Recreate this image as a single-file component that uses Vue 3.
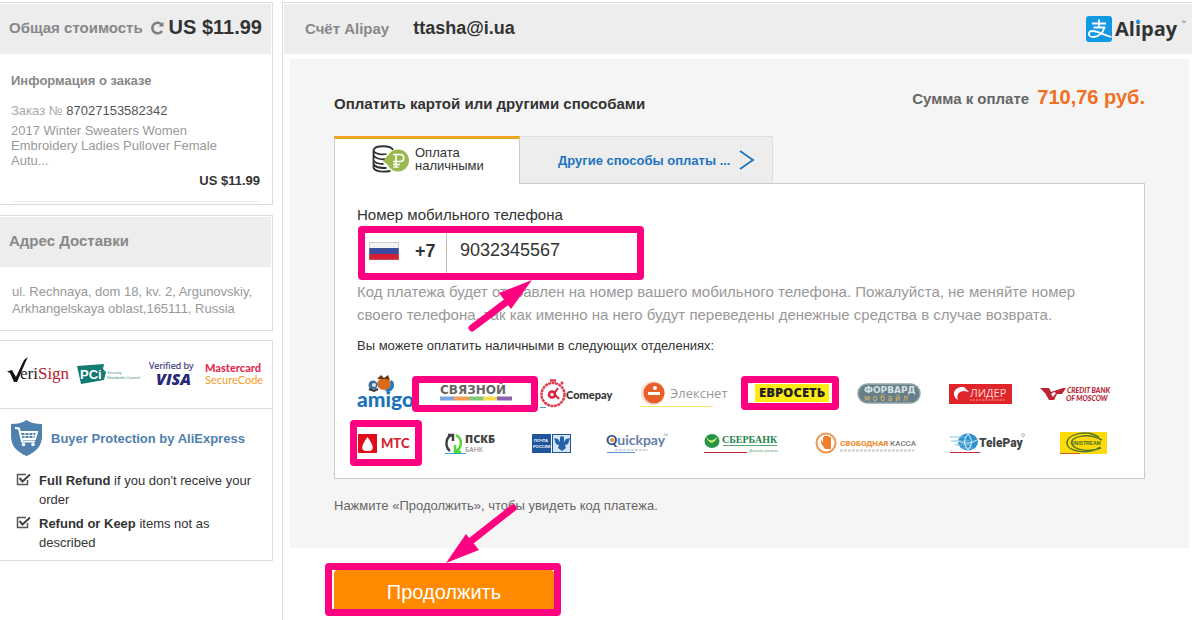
<script setup>
import { ref } from 'vue'

const phone = ref('9032345567')
const refunds = [
  { lead: 'Full Refund', rest: 'if you don\'t receive your order' },
  { lead: 'Refund or Keep', rest: 'items not as described' },
]
</script>

<template>
  <div class="page">
    <aside class="side">
      <section class="card total">
        <header class="bar">
          <h2>Общая стоимость</h2>
          <svg class="reload" width="14" height="14" viewBox="0 0 14 14">
            <path d="M12 4A5.300 5.300 0 1 0 12 10" fill="none" stroke="#808080" stroke-width="2.600" />
            <path d="M8.500 5.500h5V1z" fill="#808080" />
          </svg>
          <strong>US $11.99</strong>
        </header>
        <div class="order">
          <h3>Информация о заказе</h3>
          <p class="number">Заказ № <span>87027153582342</span></p>
          <p class="item">2017 Winter Sweaters Women<br />Embroidery Ladies Pullover Female<br />Autu...</p>
          <p class="price">US $11.99</p>
        </div>
      </section>

      <section class="card address">
        <header class="bar"><h2>Адрес Доставки</h2></header>
        <p>ul. Rechnaya, dom 18, kv. 2, Argunovskiy,<br />Arkhangelskaya oblast,165111, Russia</p>
      </section>

      <section class="card trust">
        <div class="seals">
          <svg width="62" height="32" viewBox="0 0 62 32">
            <text x="13" y="22" class="serif" font-size="17" fill="#222">eri<tspan fill="#b5202c">Sign</tspan></text>
            <path d="M0 14.500l5-1.500 4 7L17 3l4-3-2 4-9 21H7L3 16z" fill="#111" />
          </svg>
          <svg width="64" height="32" viewBox="0 0 64 32">
            <path d="M0 9l27-2-1 5 3 3-2 8-23 4z" fill="#147a74" />
            <text x="3" y="22" font-size="13" font-weight="700" fill="#fff">PCi</text>
            <text x="30" y="17" font-size="4" fill="#3d918b">Security</text>
            <text x="30" y="22" font-size="4" fill="#3d918b">Standards Council</text>
          </svg>
          <svg width="48" height="32" viewBox="0 0 48 32">
            <text x="0" y="12" class="open" font-size="9" fill="#3b397f" stroke="#3b397f" stroke-width=".2">Verified by</text>
            <text x="7" y="28" class="open" font-size="16" font-weight="800" font-style="italic" fill="#292777">VISA</text>
          </svg>
          <svg width="60" height="32" viewBox="0 0 60 32">
            <text x="0" y="15" class="lato" font-size="11" font-weight="900" fill="#e52c50">Mastercard</text>
            <text x="0" y="27" class="lato" font-size="11" fill="#f49d25">SecureCode</text>
          </svg>
        </div>
        <div class="protection">
          <h3>
            <svg width="31" height="36" viewBox="0 0 31 36">
              <path d="M15.500 0C11 3 6 4 0 4v12c0 10 6 16 15.500 20C25 32 31 26 31 16V4C25 4 20 3 15.500 0z" fill="#4f80ae" />
              <path d="M4 8l4 .5 3 13h13M9 12h17l-2 7H11" fill="none" stroke="#fff" stroke-width="2" />
              <path d="M14 13v5M18 13v5M22 13v5M10 15.500h15" stroke="#fff" />
              <circle cx="12.500" cy="24.500" r="1.800" fill="#fff" /><circle cx="22" cy="24.500" r="1.800" fill="#fff" />
            </svg>
            <span>Buyer Protection by AliExpress</span>
          </h3>
          <ul>
            <li v-for="r in refunds" :key="r.lead">
              <svg width="15" height="13" viewBox="0 0 15 13">
                <path d="M10 1.500H1.500v10h10V7" fill="none" stroke="#555" stroke-width="1.500" />
                <path d="M3.500 5l3 3.500L14 1.500" fill="none" stroke="#444" stroke-width="2" />
              </svg>
              <span><b>{{ r.lead }}</b> {{ r.rest }}</span>
            </li>
          </ul>
        </div>
      </section>
    </aside>

    <main class="main">
      <header class="bar account">
        <h2>Счёт Alipay</h2>
        <strong>ttasha@i.ua</strong>
        <svg class="alipay" width="102" height="26" viewBox="0 0 102 26">
          <rect width="26" height="26" rx="3" fill="#1199e4" />
          <path d="M6 7.500h14M13 3.500v8M7.500 11.500h11c-1.500 5-6 9.500-11 9.500-6 0-6-6-1-6 6 0 11 4 19 6" fill="none" stroke="#fff" stroke-width="1.800" />
          <text x="29" y="20" class="open" font-size="20" font-weight="700" fill="#333">Alipay</text>
          <circle cx="52" cy="5.500" r="2" fill="#1199e4" />
          <text x="95" y="8" font-size="5" fill="#555">™</text>
        </svg>
      </header>

      <div class="panel">
        <div class="heading">
          <h1>Оплатить картой или другими способами</h1>
          <p>Сумма к оплате <strong>710,76 руб.</strong></p>
        </div>

        <div class="tabs">
          <button type="button" class="tab active">
            <svg width="38" height="28" viewBox="0 0 38 28">
              <g fill="none" stroke="#2f3133" stroke-width="1.800">
                <path d="M21 5C19 0 3 0 1.500 5c0 4 9 5 13 4M1.500 5v18c2 4 10 4 17 3M1.500 10c1 3 7 5 12 4M1.500 15c1 3 6 4 10 4M1.500 19c2 4 8 4 13 4" />
              </g>
              <circle cx="26" cy="15.500" r="11" fill="#99b94e" />
              <path d="M16 10l-5 6 5 4z" fill="#99b94e" />
              <path d="M24 22V9.500h4c5 0 5 7 0 7h-7M21 19.500h7M21 9.500h3M21.500 22h5" fill="none" stroke="#fff" stroke-width="1.600" />
            </svg>
            <span>Оплата<br />наличными</span>
          </button>
          <button type="button" class="tab other">
            <span>Другие способы оплаты ...</span>
            <svg width="16" height="20" viewBox="0 0 16 20">
              <path d="M1 1l13 9-13 9" fill="none" stroke="#1e74c0" stroke-width="1.800" />
            </svg>
          </button>
        </div>

        <div class="box">
          <label for="phone">Номер мобильного телефона</label>
          <div class="phone">
            <svg class="flag" width="30" height="18" viewBox="0 0 30 18">
              <rect width="30" height="18" fill="#f3f3f5" />
              <rect y="6" width="30" height="6" fill="#3e4c9e" />
              <rect y="12" width="30" height="6" fill="#d71c32" />
              <rect x=".5" y=".5" width="29" height="17" fill="none" stroke="#999" stroke-opacity=".4" />
            </svg>
            <b>+7</b>
            <input id="phone" v-model="phone" type="tel" />
            <svg class="arrow up" width="66" height="54" viewBox="0 0 66 54">
              <path d="M5 48L42 20" stroke="#ff0080" stroke-width="7" stroke-linecap="round" />
              <path d="M65 0L32 13l12 16z" fill="#ff0080" />
            </svg>
          </div>
          <p class="hint">Код платежа будет отправлен на номер вашего мобильного телефона. Пожалуйста, не меняйте номер своего телефона, так как именно на него будут переведены денежные средства в случае возврата.</p>
          <p class="places">Вы можете оплатить наличными в следующих отделениях:</p>

          <div class="brands first">
            <svg width="55" height="36" viewBox="0 0 55 36">
              <path d="M28 15c5 2 9-1 9-6 0-3-1-4-3-5" fill="#1c7ecb" />
              <ellipse cx="27" cy="8" rx="7" ry="6" fill="#d96b1c" />
              <path d="M20 3l4-4 3 3 4-3 2 5-5-1z" fill="#6c3514" />
              <circle cx="16" cy="9" r="4.500" fill="#416f9c" /><circle cx="17" cy="9" r="2" fill="#dce7ee" />
              <path d="M12 13l5 2 4-2" fill="none" stroke="#333" stroke-width="2" />
              <text x="0" y="31" class="lato" font-size="21" font-weight="900" fill="#1a72ba">amigo</text>
            </svg>
            <span class="marked svyaznoy">
              <svg width="72" height="36" viewBox="0 0 72 36">
                <text x="0" y="18" font-size="12" class="deja" font-weight="700" fill="#666">СВЯЗНОЙ</text>
                <path d="M0 22.500h14" stroke="#7aa5e2" stroke-width="4" /><path d="M14 22.500h15" stroke="#f69b55" stroke-width="4" />
                <path d="M29 22.500h14" stroke="#7fc57b" stroke-width="4" /><path d="M43 22.500h14" stroke="#f5df51" stroke-width="4" />
                <path d="M57 22.500h15" stroke="#8b63ae" stroke-width="4" />
              </svg>
            </span>
            <svg width="72" height="36" viewBox="0 0 72 36">
              <circle cx="13" cy="18.500" r="11.500" fill="none" stroke="#df3d51" stroke-width="2.500" stroke-dasharray="3 .5" />
              <path d="M10 4.500h6M21 6l2 2" stroke="#df3d51" stroke-width="2.500" />
              <circle cx="12" cy="18.500" r="3" fill="none" stroke="#d5233c" stroke-width="2.500" />
              <path d="M14 18l4-6M15 19l4 4" stroke="#d5233c" stroke-width="2" />
              <text x="26" y="23" class="lato" font-size="11" font-weight="900" fill="#333">Comepay</text>
              <path d="M0 31.500h6" stroke="#4699c0" />
            </svg>
            <svg width="87" height="36" viewBox="0 0 87 36">
              <circle cx="13" cy="17" r="12" fill="#f3dfd5" /><circle cx="14" cy="17" r="10.500" fill="#ea5f28" />
              <path d="M8 17.500h12" stroke="#fff" stroke-width="3" /><circle cx="15" cy="12" r="2" fill="#fff" />
              <text x="30" y="22" class="open" font-size="13" fill="#999">Элекснет</text>
              <path d="M0 30.500h73" stroke="#f6e76f" />
            </svg>
            <span class="marked evroset">
              <svg width="74" height="36" viewBox="0 0 74 36">
                <rect y="8" width="74" height="18" fill="#ffea12" />
                <text x="4" y="21" class="open" font-size="13" font-weight="800" fill="#222">ЕВРОСЕТЬ</text>
              </svg>
            </span>
            <svg width="64" height="36" viewBox="0 0 64 36">
              <rect x="1" y="8" width="62" height="19" rx="9.500" fill="#687e89" stroke="#93a6ad" stroke-width="1.500" />
              <text x="7" y="17" class="deja" font-size="9" font-weight="700" fill="#d6e1e6">ФОРВАРД</text>
              <text x="7" y="25" class="deja" font-size="8" fill="#ddb85d">м о б а й л</text>
            </svg>
            <svg width="63" height="36" viewBox="0 0 63 36">
              <rect y="8" width="63" height="20" fill="#df252a" />
              <path d="M9 24c-8-6-3-14 6-13l5 5-5-1c-5 0-8 4-6 9z" fill="#fff" />
              <text x="21" y="21" class="open" font-size="11" fill="#ffdcd8">ЛИДЕР</text>
              <path d="M21 24h36" stroke="#f0a09e" stroke-dasharray="2 1" />
            </svg>
            <svg width="71" height="36" viewBox="0 0 71 36">
              <path d="M0 12h9l2 4 12-4h3l-4 6h-5l-3 6h-5l-4-7H5z" fill="#bd2332" />
              <path d="M11 18l3-2 2 1-3 4z" fill="#fff" />
              <text x="27" y="17" class="lato" font-size="7" font-weight="900" font-style="italic" fill="#b92233">CREDIT BANK</text>
              <text x="26" y="25" class="lato" font-size="7" font-weight="900" font-style="italic" fill="#b92233">OF MOSCOW</text>
            </svg>
          </div>
          <div class="brands second">
            <span class="marked mts">
              <svg width="52" height="30" viewBox="0 0 52 30">
                <rect y="6" width="19" height="19" fill="#e20c19" /><path d="M9.500 9c-8 11-6 14 0 14s8-3 0-14z" fill="#fff" />
                <text x="23" y="20" class="lato" font-size="13" font-weight="900" fill="#d72130">МТС</text>
              </svg>
            </span>
            <svg width="52" height="30" viewBox="0 0 52 30">
              <path d="M7 7C0 9 0 19 5 23M3 7h5v6" fill="none" stroke="#3d4144" stroke-width="2.500" />
              <path d="M11 7c7 4 6 13 0 16M16 24h-6v-7" fill="none" stroke="#55d43c" stroke-width="2.500" />
              <text x="20" y="15" class="open" font-size="11" font-weight="800" fill="#3f4346">ПСКБ</text>
              <text x="20" y="24" class="open" font-size="7" fill="#777">БАНК</text><path d="M0 25.500h21" stroke="#35a6c3" />
            </svg>
            <svg width="39" height="30" viewBox="0 0 39 30">
              <rect y="6" width="19" height="19" fill="#1e559e" /><rect x="20.500" y="6.500" width="18" height="18" fill="#d5e5f5" stroke="#1e559e" />
              <text x="2" y="14" font-size="4" font-weight="700" fill="#fff">ПОЧТА</text><text x="1" y="20" font-size="4" font-weight="700" fill="#fff">РОССИИ</text>
              <path d="M22 10l4 1 2 3V9l2-1 2 1v5l2-3 4-1-2 6-3 1 1 3-4 3-4-3 1-3-3-1z" fill="#2563a8" />
            </svg>
            <svg width="63" height="30" viewBox="0 0 63 30">
              <text x="0" y="17" class="lato" font-size="14" font-weight="700" fill="#667eaa"><tspan fill="#31528a">Q</tspan>uickpay</text>
              <text x="57" y="9" font-size="5" fill="#667eaa">™</text>
              <circle cx="6" cy="12" r="2" fill="#ee8d3e" /><path d="M9 22h33" stroke="#9eabc4" stroke-dasharray="3 1" /><path d="M1 24.500h28" stroke="#5792d4" />
            </svg>
            <svg width="76" height="30" viewBox="0 0 76 30">
              <ellipse cx="8" cy="13" rx="7.500" ry="7" fill="#249449" /><path d="M2 8c3 6 8 5 12 0-3 8-9 10-12 0z" fill="#c0e36f" />
              <text x="18" y="15" class="serif" font-size="10" font-weight="700" fill="#25834a">СБЕРБАНК</text>
              <path d="M19 17.500h54" stroke="#5ba575" /><text x="45" y="24" class="serif" font-size="5" font-style="italic" fill="#58a16c">Всегда рядом</text><path d="M0 24.500h43" stroke="#b72037" />
            </svg>
            <svg width="100" height="30" viewBox="0 0 100 30">
              <circle cx="11" cy="15" r="9.500" fill="#fff" stroke="#ef9852" stroke-width="2" />
              <path d="M6 11v4l4 6h6V9h-2v5V8h-2v6V8H9v6V9H8v6z" fill="#ee7d2c" />
              <text x="25" y="18" class="roboto" font-size="8" font-weight="900" fill="#ef9039">СВОБОДНАЯ <tspan fill="#777" font-weight="500">КАССА</tspan></text>
              <path d="M25 22.500h74" stroke="#ccc" stroke-width="2" stroke-dasharray="3 1" />
            </svg>
            <svg width="75" height="30" viewBox="0 0 75 30">
              <ellipse cx="18" cy="14" rx="10" ry="8.500" fill="#2d91cf" /><path d="M0 9h17M1 13h18M5 17h17M12 20h11" stroke="#7cc3e3" stroke-width="1" />
              <path d="M8 13q10 5 19-1M18 6q-7 8 0 16M18 6q7 8 0 16" fill="none" stroke="#e5f3fa" />
              <text x="29" y="19" class="roboto" font-size="12" font-weight="900" fill="#444">TelePay</text>
              <circle cx="73" cy="7" r="1.500" fill="none" stroke="#777" stroke-width=".5" /><path d="M0 24.500h30" stroke="#ca2a3c" />
            </svg>
            <svg width="47" height="30" viewBox="0 0 47 30">
              <rect y="4" width="47" height="22" fill="#ffda09" /><path d="M39 9C27 1 7 6 7 15s22 12 33 4M42 12C27 4 9 9 12 16s19 8 29 4" fill="none" stroke="#50752c" stroke-width="1.500" />
              <text x="11" y="17" font-size="5" font-weight="700" fill="#446b2b">UNISTREAM</text><path d="M0 25.500h20" stroke="#d35a2b" />
            </svg>
          </div>
        </div>

        <p class="next">Нажмите «Продолжить», чтобы увидеть код платежа.</p>
      </div>

      <div class="submit">
        <button type="button">Продолжить</button>
        <svg class="arrow down" width="72" height="62" viewBox="0 0 72 62">
          <path d="M67 6L25 39" stroke="#ff0080" stroke-width="7" stroke-linecap="round" />
          <path d="M0 61l20-29 13 16z" fill="#ff0080" />
        </svg>
      </div>
    </main>
  </div>
</template>

<style>
body {
  background: #fff;
}
</style>

<style scoped>
* {
  box-sizing: border-box;
}
.page {
  display: flex;
  gap: 9px;
  min-height: 100vh;
  padding-top: 2px;
  font-family: "Liberation Sans", Arial, sans-serif;
  font-size: 13px;
  color: #333;
}
h1, h2, h3, p, ul {
  margin: 0;
  padding: 0;
}
svg {
  display: block;
  flex: none;
  overflow: visible;
}
svg text { font-family: "Liberation Sans", Arial, sans-serif; }
svg .serif { font-family: "Liberation Serif", serif; }
svg .open { font-family: "Open Sans", sans-serif; }
svg .lato { font-family: Lato, sans-serif; }
svg .deja { font-family: "DejaVu Sans", sans-serif; }
svg .roboto { font-family: Roboto, sans-serif; }

.side {
  flex: none;
  width: 273px;
  display: flex;
  flex-direction: column;
  gap: 10px;
}
.card {
  border: 1px solid #ddd;
  border-left: 0;
}
.bar {
  display: flex;
  align-items: center;
  height: 50px;
  margin: 1px 1px 0 0;
  padding: 0 9px 3px;
  background: #ededed;
}
.bar h2 {
  font-size: 15px;
  color: #888;
  white-space: nowrap;
}
.reload { margin-left: 7px; }
.total .bar strong {
  margin-left: auto;
  font-size: 20px;
}
.order {
  margin: 0 12px 2px 11px;
  padding: 18px 0 12px;
  border-bottom: 1px dotted #ddd;
}
.order h3 {
  font-size: 13px;
  line-height: 18px;
  color: #888;
}
.number {
  margin-top: 13px;
  line-height: 16px;
  color: #aaa;
}
.number span { color: #555; }
.item {
  margin-top: 4px;
  line-height: 15px;
  color: #999;
}
.price {
  margin-top: 5px;
  line-height: 16px;
  font-weight: 700;
  text-align: right;
}
.address p {
  padding: 16px 12px 13px;
  line-height: 17px;
  color: #999;
  white-space: nowrap;
}
.trust { margin-top: -1px; }
.seals {
  display: flex;
  align-items: center;
  gap: 8px;
  height: 68px;
  padding: 0 0 4px 7px;
  border-bottom: 1px solid #ddd;
}
.protection { padding: 11px 11px 3px; }
.protection h3 {
  display: flex;
  align-items: center;
  gap: 9px;
  font-size: 13px;
  color: #4f80ae;
  white-space: nowrap;
}
.protection ul {
  margin-top: 15px;
  list-style: none;
}
.protection li {
  display: flex;
  gap: 8px;
  margin-bottom: 5px;
  padding-left: 5px;
  line-height: 19px;
}
.protection li svg { margin-top: 2px; }

.main {
  flex: 1;
  min-width: 0;
  border: solid #ddd;
  border-width: 1px 0 0 1px;
}
.account {
  margin: 1px 0 0 1px;
  padding: 0 4px 2px 21px;
}
.account strong {
  margin-left: 24px;
  font-size: 18px;
}
.alipay { margin: 2px 0 0 auto; }
.panel {
  margin: 5px 3px 0 7px;
  padding: 21px 44px 33px;
  background: #f5f5f5;
}
.heading {
  display: flex;
  justify-content: space-between;
  align-items: center;
  height: 56px;
  padding-bottom: 22px;
}
.heading h1 {
  margin-top: 12px;
  font-size: 15px;
}
.heading p {
  font-size: 15px;
  font-weight: 700;
  color: #666;
}
.heading strong {
  margin-left: 4px;
  font-size: 20px;
  color: #f07021;
}
.tabs {
  position: relative;
  display: flex;
  align-items: stretch;
  height: 48px;
  margin-bottom: -1px;
}
.tab {
  display: flex;
  align-items: center;
  border: 1px solid #ccc;
  font-family: inherit;
  font-size: 13px;
  text-align: left;
  color: #333;
}
.tab.active {
  gap: 5px;
  width: 186px;
  padding: 0 0 6px 37px;
  border-top: 3px solid #f0a61c;
  border-bottom: 0;
  background: #fff;
  line-height: 13px;
}
.tab.other {
  gap: 9px;
  width: 253px;
  padding: 0 0 0 38px;
  border-left: 0;
  border-color: #ddd;
  border-bottom-color: #ccc;
  background: #ededed;
  font-weight: 700;
  color: #1e74c0;
  white-space: nowrap;
}
.box {
  padding: 22px 21px 20px 22px;
  border: 1px solid #ccc;
  background: #fff;
}
.box label {
  display: block;
  font-size: 15px;
  line-height: 18px;
}
.phone {
  position: relative;
  display: flex;
  align-items: center;
  width: 286px;
  height: 54px;
  margin: 2px 0 0 1px;
  padding: 0 7px 4px 11px;
  border-radius: 4px;
}
.phone::after, .marked::after, .submit::after {
  content: "";
  position: absolute;
  inset: 0;
  border: 7px solid #ff0080;
  border-radius: 4px;
  pointer-events: none;
}
.phone b {
  width: 47px;
  padding-left: 16px;
  font-size: 18px;
}
.phone input {
  flex: 1;
  min-width: 0;
  height: 42px;
  margin-top: 4px;
  padding: 0 0 6px 13px;
  border: 0;
  border-left: 1px solid #bbb;
  background: none;
  font: 18px "Liberation Sans", Arial, sans-serif;
  color: #333;
}
.arrow {
  position: absolute;
  z-index: 2;
}
.arrow.up { left: 109px; top: 54px; }
.hint {
  font-size: 15px;
  line-height: 23px;
  color: #999;
}
.places {
  margin-top: 10px;
  line-height: 20px;
}
.brands {
  display: flex;
  align-items: center;
}
.brands.first {
  gap: 28px;
  margin-top: 20px;
}
.brands.second {
  gap: 35px;
  margin: 16px 0 0 1px;
}
.marked { position: relative; }
.svyaznoy::after { inset: 0 -26px 0 -28px; }
.evroset::after { inset: 0 -10px 2px -14px; }
.mts::after { inset: -8px -12px -8px -8px; }
.next {
  margin-top: 17px;
  line-height: 19px;
  color: #666;
}
.submit {
  position: relative;
  width: 236px;
  height: 53px;
  margin: 15px 0 0 42px;
  padding: 7px 7px 7px 9px;
}
.submit button {
  width: 100%;
  height: 39px;
  padding: 6px 0 0;
  border: 0;
  border-radius: 4px 4px 0 0;
  background: #ff8a00;
  font: 20px "Liberation Sans", Arial, sans-serif;
  color: #fff;
}
.arrow.down { left: 121px; top: -61px; }
</style>
